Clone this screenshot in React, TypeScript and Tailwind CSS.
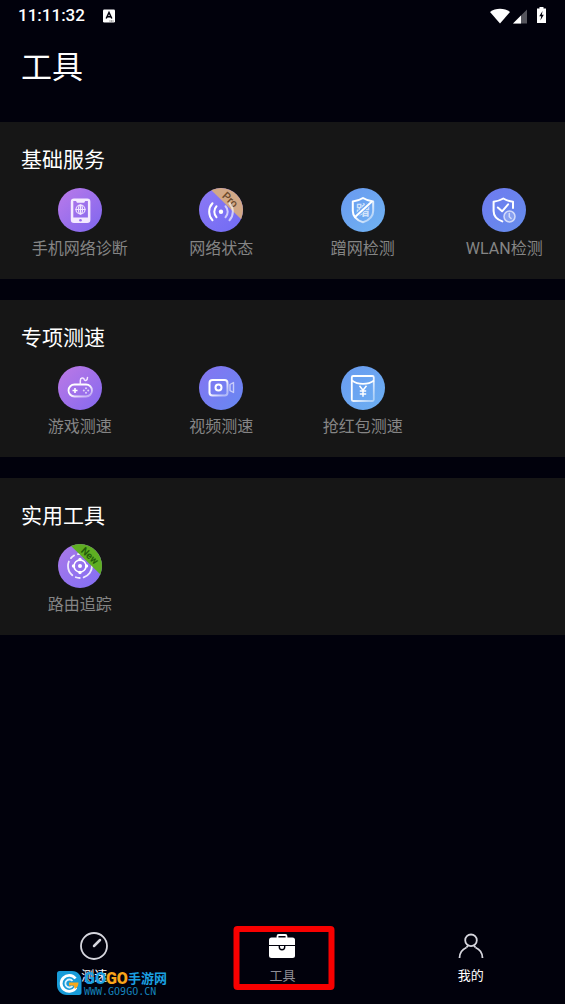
import type { ReactNode } from "react";
import clsx from "clsx";

type Tool = {
  label: string;
  icon: ReactNode;
};

type Section = {
  title: string;
  tools: Tool[];
};

type DiscProps = {
  id: string;
  from: string;
  to: string;
  children: ReactNode;
};

const Disc = ({ id, from, to, children }: DiscProps) => (
  <svg className="size-11 flex-none" viewBox="0 0 44 44" fill="none" aria-hidden="true">
    <defs>
      <linearGradient id={id} x1="0.1" y1="0.1" x2="0.85" y2="0.9">
        <stop stopColor={from} />
        <stop offset="1" stopColor={to} />
      </linearGradient>
      <linearGradient id={`${id}-line`} x1="0.1" y1="0.1" x2="0.9" y2="0.9">
        <stop offset="0.4" stopColor="#fff" />
        <stop offset="1" stopColor="#fff" stopOpacity="0.45" />
      </linearGradient>
      <clipPath id={`${id}-clip`}>
        <circle cx="22" cy="22" r="22" />
      </clipPath>
    </defs>
    <circle cx="22" cy="22" r="22" fill={`url(#${id})`} />
    {children}
  </svg>
);

const DiagnoseIcon = () => (
  <Disc id="diagnose" from="#b578ea" to="#8569ee">
    <path
      d="M16 10.500h13.200a3.200 3.200 0 0 1 3.200 3.200v18a3.200 3.200 0 0 1-3.200 3.200H16a3.200 3.200 0 0 1-3.200-3.200v-18a3.200 3.200 0 0 1 3.200-3.200ZM15.300 13v16.500h14.600V13h-2.700l-1 1.800h-7.200l-1-1.800Z"
      fill="#f4eaff"
      fillRule="evenodd"
    />
    <circle cx="22.500" cy="32.200" r="1.300" fill="#9a70ee" />
    <g stroke="#f0e4ff" strokeWidth="1.200">
      <circle cx="22.500" cy="21.500" r="4.500" />
      <ellipse cx="22.500" cy="21.500" rx="2" ry="4.500" />
      <path d="M17.500 21.500h10M22.500 16.500v10" />
    </g>
  </Disc>
);

const NetworkIcon = () => (
  <Disc id="network" from="#8a78f5" to="#746df4">
    <path d="M9-1 45 34V-1Z" fill="#d2a886" clipPath="url(#network-clip)" />
    <text
      x="31"
      y="15.500"
      fontSize="11"
      fontWeight="500"
      fill="#6d4a2c"
      textAnchor="middle"
      transform="rotate(43 31 12)"
      fontFamily="Roboto, sans-serif"
    >
      Pro
    </text>
    <circle cx="22" cy="23.700" r="2.200" fill="#fff" />
    <g stroke="#fff" strokeWidth="2" strokeLinecap="round">
      <path d="M17.500 18.200a8 8 0 0 0 0 11M13.500 15.200a12.500 12.500 0 0 0 0 17" />
      <path d="M26.500 18.200a8 8 0 0 1 0 11M30.500 15.200a12.500 12.500 0 0 1 0 17" opacity="0.650" />
    </g>
  </Disc>
);

const ShareCheckIcon = () => (
  <Disc id="share" from="#6a9cf0" to="#6fb0f2">
    <text
      x="22"
      y="27"
      fontSize="14"
      fontWeight="700"
      fill="#fff"
      fillOpacity="0.700"
      textAnchor="middle"
      fontFamily="'Noto Sans CJK SC', sans-serif"
    >
      蹭
    </text>
    <path d="M29.500 14.500 15 28" stroke="#6ca5f1" strokeWidth="4" />
    <path
      d="M22 10c3 2 6.500 3 10.200 3.400V23c0 5.500-4.200 9.300-10.200 11.300C16 32.300 11.800 28.500 11.800 23v-9.600C15.500 13 19 12 22 10Z"
      stroke="url(#share-line)"
      strokeWidth="2"
      strokeLinejoin="round"
    />
    <path d="M31.500 13 13.500 29.500" stroke="#fff" strokeWidth="2" />
  </Disc>
);

const WlanIcon = () => (
  <Disc id="wlan" from="#6e7cf0" to="#668bec">
    <path
      d="M31 20v-6.300c-3.700-.4-6.700-1.400-9.700-3.200-3 1.800-6 2.800-9.700 3.200V23c0 5 3.400 8.500 8.700 10.400"
      stroke="#fff"
      strokeWidth="2"
      strokeLinecap="round"
      strokeLinejoin="round"
    />
    <path d="m15.800 19.500 4.300 3.800 6-7" stroke="#fff" strokeWidth="2" strokeLinecap="round" strokeLinejoin="round" />
    <g opacity="0.700" stroke="#fff" strokeWidth="1.500" strokeLinecap="round">
      <circle cx="27.500" cy="28.500" r="5.500" fill="#fff" fillOpacity="0.300" />
      <path d="M27.300 25.500v3.200l1.800 1.800" />
    </g>
  </Disc>
);

const GameIcon = () => (
  <Disc id="game" from="#b777e6" to="#8b6bee">
    <rect x="10.500" y="18.500" width="23.500" height="12" rx="6" stroke="url(#game-line)" strokeWidth="1.800" />
    <path
      d="M22.300 18v-3.500c0-3 3.300-3.300 3.900-1.200.7 2.200 3.300 1.200 3.300-1.800"
      stroke="#f5e8ff"
      strokeWidth="1.500"
      strokeLinecap="round"
    />
    <path d="M17 22v5M14.500 24.500h5" stroke="#fff" strokeWidth="1.600" />
    <g fill="#fff" fillOpacity="0.700">
      <circle cx="28" cy="22.300" r="1" />
      <circle cx="28" cy="26.700" r="1" />
      <circle cx="25.800" cy="24.500" r="1" />
      <circle cx="30.200" cy="24.500" r="1" />
    </g>
  </Disc>
);

const VideoIcon = () => (
  <Disc id="video" from="#8276f2" to="#6a86f2">
    <rect x="10.500" y="14" width="18" height="15.500" rx="3" stroke="url(#video-line)" strokeWidth="2" />
    <circle cx="19.500" cy="21.500" r="3" stroke="#fff" strokeWidth="2" />
    <path
      d="M31 18.500 34.500 16.500v10l-3.500-1.800Z"
      stroke="#fff"
      strokeOpacity="0.600"
      strokeWidth="1.400"
      strokeLinejoin="round"
    />
  </Disc>
);

const RedPacketIcon = () => (
  <Disc id="packet" from="#6a9df0" to="#6cadf2">
    <rect x="10.800" y="10" width="22" height="25" rx="1.500" stroke="url(#packet-line)" strokeWidth="1.800" />
    <path d="M11 14.500c6 4.500 16 4.500 22 0" stroke="#fff" strokeWidth="1.600" />
    <path
      d="m18.500 19.800 3.500 4.500 3.500-4.500M22 24.300v6.500M18.800 25h6.400M18.800 28h6.400"
      stroke="#fff"
      strokeWidth="1.500"
    />
  </Disc>
);

const RouteIcon = () => (
  <Disc id="route" from="#a678ea" to="#866ff2">
    <g stroke="#fff" strokeLinecap="round">
      <circle cx="22" cy="22" r="12" strokeWidth="1.800" strokeDasharray="15 4 4 4" opacity="0.850" />
      <circle cx="22" cy="22" r="6" strokeWidth="1.600" />
    </g>
    <g fill="#fff">
      <circle cx="22" cy="22" r="2" />
      <circle cx="22" cy="15.500" r="1.700" />
      <circle cx="22" cy="28.500" r="1.700" />
      <circle cx="15.500" cy="22" r="1.700" />
      <circle cx="28.500" cy="22" r="1.700" />
    </g>
    <path d="M10-1 45 33V-1Z" fill="#5fae22" clipPath="url(#route-clip)" />
    <text
      x="31.500"
      y="15"
      fontSize="10"
      fontWeight="700"
      fill="#245d0b"
      textAnchor="middle"
      transform="rotate(43 31.500 12)"
      fontFamily="Roboto, sans-serif"
    >
      New
    </text>
  </Disc>
);

const GaugeIcon = () => (
  <svg className="size-8" viewBox="0 0 32 32" fill="none" stroke="#d6d6de" aria-hidden="true">
    <circle cx="16" cy="16" r="13" strokeWidth="1.800" />
    <path d="m16 16 6-6" strokeWidth="2.500" strokeLinecap="round" />
  </svg>
);

const BagIcon = () => (
  <svg className="size-8" viewBox="0 0 32 32" fill="none" aria-hidden="true">
    <path d="M11.500 8.500V6.200c0-.8.500-1.200 1.200-1.200h6.600c.7 0 1.200.4 1.200 1.200v2.300" stroke="#fff" strokeWidth="1.800" />
    <rect x="3" y="7.500" width="26" height="20.500" rx="2.500" fill="#fff" />
    <path d="M3 15.500h26" stroke="#01010c" strokeWidth="1" />
    <path d="M13.300 15.500v1.500a2.700 2.700 0 0 0 5.400 0v-1.500" stroke="#01010c" strokeWidth="1.400" />
  </svg>
);

const PersonIcon = () => (
  <svg className="size-8" viewBox="0 0 32 32" fill="none" stroke="#d6d6de" strokeWidth="1.800" aria-hidden="true">
    <circle cx="16" cy="10.300" r="5.800" />
    <path d="M4.500 28a11.600 11.600 0 0 1 7-10.500M27.500 28a11.600 11.600 0 0 0-7-10.500" />
    <path d="M11.500 17.500 13 15.500M20.500 17.500 19 15.500" />
  </svg>
);

const sections: Section[] = [
  {
    title: "基础服务",
    tools: [
      { label: "手机网络诊断", icon: <DiagnoseIcon /> },
      { label: "网络状态", icon: <NetworkIcon /> },
      { label: "蹭网检测", icon: <ShareCheckIcon /> },
      { label: "WLAN检测", icon: <WlanIcon /> },
    ],
  },
  {
    title: "专项测速",
    tools: [
      { label: "游戏测速", icon: <GameIcon /> },
      { label: "视频测速", icon: <VideoIcon /> },
      { label: "抢红包测速", icon: <RedPacketIcon /> },
    ],
  },
  {
    title: "实用工具",
    tools: [{ label: "路由追踪", icon: <RouteIcon /> }],
  },
];

const tabs = [
  { label: "测速", icon: <GaugeIcon />, active: false },
  { label: "工具", icon: <BagIcon />, active: true },
  { label: "我的", icon: <PersonIcon />, active: false },
];

const StatusBar = () => (
  <div className="h-8 flex items-center justify-between pl-[18px] pr-[19px]">
    <div className="flex items-center gap-[18px]">
      <span className="text-[17px] font-medium">11:11:32</span>
      <svg className="w-3 h-[14px]" viewBox="0 0 12 14" aria-hidden="true">
        <rect y="0.500" width="12" height="13" rx="1.200" fill="#fff" />
        <path d="m3.200 9.500 2.800-6 2.800 6M4.300 7.700h3.400" fill="none" stroke="#01010c" strokeWidth="1.500" />
        <path d="M6.500 12h4" stroke="#555" strokeWidth="1" strokeDasharray="1 0.500" />
      </svg>
    </div>
    <div className="flex items-center gap-[10px]">
      <svg className="w-[37px] h-[18px]" viewBox="0 0 37 18" aria-hidden="true">
        <path d="M0 5C5.500.700 14.500.700 20 5L10 16.500Z" fill="#fff" />
        <path d="M37 2.500v14H23Z" fill="#55555d" />
        <path d="M31 8.500v8h-8Z" fill="#fff" />
      </svg>
      <svg className="w-[9px] h-[18px]" viewBox="0 0 9 18" aria-hidden="true">
        <path d="M2.500 0h4v1.500H9V16H0V1.500h2.500Z" fill="#fff" />
        <path d="M5.600 4 2.200 9.200h2L3.400 13.500l3.400-5.700h-2Z" fill="#01010c" />
      </svg>
    </div>
  </div>
);

const ToolSection = ({ title, tools }: Section) => (
  <section className="bg-[#161616] pt-[22px] pb-[18px]">
    <h2 className="pl-[21px] text-[21px] leading-8">{title}</h2>
    <div className="mt-3 grid grid-cols-4 gap-12 pl-[33px] pr-[14px]">
      {tools.map((tool) => (
        <button key={tool.label} type="button" className="min-w-0 flex flex-col items-center gap-[5px]">
          {tool.icon}
          <span className="text-[16px] leading-6 whitespace-nowrap text-[#858585]">{tool.label}</span>
        </button>
      ))}
    </div>
  </section>
);

const Watermark = () => (
  <div className="absolute left-[56px] bottom-2 flex items-center gap-[2px]">
    <svg className="size-[26px] flex-none" viewBox="0 0 26 26" fill="none" aria-hidden="true">
      <path d="M3.500 1H16c6 0 9.500 4.500 9.500 10v11.500a2.500 2.500 0 0 1-2.500 2.500H11C5 25 1 20.500 1 15V3.500A2.500 2.500 0 0 1 3.500 1Z" fill="#189bd8" />
      <path d="M19.500 8.500a8 8 0 1 0 .5 9" stroke="#fff" strokeWidth="2.800" />
      <path d="M16.500 11a4 4 0 1 0 0 5" stroke="#d9f1ff" strokeWidth="1.800" />
      <path d="M13 12.500h9.500c0 3-1.300 5.200-3.500 6.500l-1.500-3.500H13Z" fill="#f7a81b" />
    </svg>
    <div className="flex flex-col">
      <div className="flex items-center h-[18px] font-bold leading-[18px] text-[#1ba0e2]">
        <span className="text-[16px] font-black">GO</span>
        <span className="text-[16px] font-black text-[#f9a51a]">GO</span>
        <span className="text-[13px]">手游网</span>
      </div>
      <span className="font-['DejaVu_Sans_Mono',monospace] text-[10px] leading-[8px] text-[#1583bb]">
        WWW.GO9GO.CN
      </span>
    </div>
  </div>
);

const App = () => {
  return (
    <div className="relative min-h-screen flex flex-col bg-[#01010c] text-white font-[Roboto,'Noto_Sans_CJK_SC',sans-serif]">
      <StatusBar />
      <header className="h-[90px] pt-3 pl-[21px]">
        <h1 className="text-[31px] leading-[48px]">工具</h1>
      </header>
      <main className="flex-1 flex flex-col gap-[21px]">
        {sections.map((section) => (
          <ToolSection key={section.title} {...section} />
        ))}
      </main>
      <nav className="grid grid-cols-3 pb-[18px]">
        {tabs.map((tab) => (
          <button
            key={tab.label}
            type="button"
            className="relative flex flex-col items-center pt-1"
            aria-current={tab.active ? "page" : undefined}
          >
            {tab.icon}
            <span className={clsx("mt-1 text-[13px] leading-5", tab.active && "text-[#8e8e96]")}>{tab.label}</span>
            {tab.active && (
              <span className="absolute top-0 left-1/2 w-[101px] h-16 -translate-x-1/2 ml-[2px] rounded-sm border-[6px] border-[#f80000]" />
            )}
          </button>
        ))}
      </nav>
      <Watermark />
    </div>
  );
};

export default App;
